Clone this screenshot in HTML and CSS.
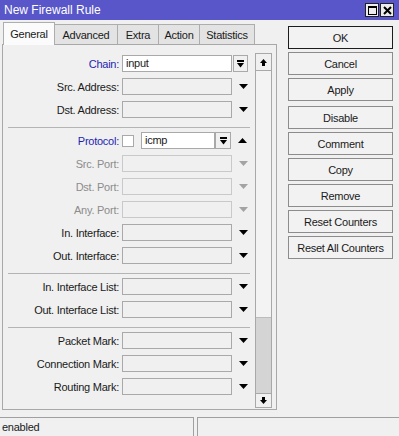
FILE: index.html
```html
<!DOCTYPE html>
<html lang="en">
<head>
  <meta charset="UTF-8">
  <title>New Firewall Rule</title>
  <link rel="stylesheet" href="styles.css">
</head>
<body>
  <div class="titlebar">
    <span class="title">New Firewall Rule</span>
    <div class="win-btns">
      <div class="win-btn">
        <svg width="9" height="9" viewBox="0 0 9 9"><rect x="0.5" y="0.5" width="8" height="8" fill="none" stroke="#000"/><rect x="0" y="0" width="9" height="2" fill="#000"/></svg>
      </div>
      <div class="win-btn">
        <svg width="9" height="9" viewBox="0 0 9 9"><path d="M1 1 L8 8 M8 1 L1 8" stroke="#000" stroke-width="2"/></svg>
      </div>
    </div>
  </div>

  <div class="main">
    <div class="left">
      <div class="tabs">
        <div class="tab active" style="width:52px">General</div>
        <div class="tab" style="width:63px">Advanced</div>
        <div class="tab" style="width:41px">Extra</div>
        <div class="tab" style="width:41px">Action</div>
        <div class="tab" style="width:55px">Statistics</div>
      </div>

      <div class="panel">
        <div class="form">
          <div class="row">
            <span class="label blue">Chain:</span>
            <div class="field filled">input</div>
            <div class="dd-btn">
              <svg width="7" height="8" viewBox="0 0 7 8"><rect x="0" y="0" width="7" height="2"/><polygon points="0,3 7,3 3.5,7.5"/></svg>
            </div>
          </div>
          <div class="row">
            <span class="label">Src. Address:</span>
            <div class="field"></div>
            <div class="arrow"><svg width="9" height="5" viewBox="0 0 9 5"><polygon points="0,0 9,0 4.5,5"/></svg></div>
          </div>
          <div class="row">
            <span class="label">Dst. Address:</span>
            <div class="field"></div>
            <div class="arrow"><svg width="9" height="5" viewBox="0 0 9 5"><polygon points="0,0 9,0 4.5,5"/></svg></div>
          </div>

          <div class="sep"></div>

          <div class="row">
            <span class="label blue">Protocol:</span>
            <div class="check"></div>
            <div class="field filled short">icmp</div>
            <div class="dd-btn wide">
              <svg width="7" height="8" viewBox="0 0 7 8"><rect x="0" y="0" width="7" height="2"/><polygon points="0,3 7,3 3.5,7.5"/></svg>
            </div>
            <div class="arrow up"><svg width="9" height="5" viewBox="0 0 9 5"><polygon points="0,5 9,5 4.5,0"/></svg></div>
          </div>
          <div class="row disabled">
            <span class="label">Src. Port:</span>
            <div class="field"></div>
            <div class="arrow"><svg width="9" height="5" viewBox="0 0 9 5"><polygon points="0,0 9,0 4.5,5"/></svg></div>
          </div>
          <div class="row disabled">
            <span class="label">Dst. Port:</span>
            <div class="field"></div>
            <div class="arrow"><svg width="9" height="5" viewBox="0 0 9 5"><polygon points="0,0 9,0 4.5,5"/></svg></div>
          </div>
          <div class="row disabled">
            <span class="label">Any. Port:</span>
            <div class="field"></div>
            <div class="arrow"><svg width="9" height="5" viewBox="0 0 9 5"><polygon points="0,0 9,0 4.5,5"/></svg></div>
          </div>
          <div class="row">
            <span class="label">In. Interface:</span>
            <div class="field"></div>
            <div class="arrow"><svg width="9" height="5" viewBox="0 0 9 5"><polygon points="0,0 9,0 4.5,5"/></svg></div>
          </div>
          <div class="row">
            <span class="label">Out. Interface:</span>
            <div class="field"></div>
            <div class="arrow"><svg width="9" height="5" viewBox="0 0 9 5"><polygon points="0,0 9,0 4.5,5"/></svg></div>
          </div>

          <div class="sep"></div>

          <div class="row">
            <span class="label">In. Interface List:</span>
            <div class="field"></div>
            <div class="arrow"><svg width="9" height="5" viewBox="0 0 9 5"><polygon points="0,0 9,0 4.5,5"/></svg></div>
          </div>
          <div class="row">
            <span class="label">Out. Interface List:</span>
            <div class="field"></div>
            <div class="arrow"><svg width="9" height="5" viewBox="0 0 9 5"><polygon points="0,0 9,0 4.5,5"/></svg></div>
          </div>

          <div class="sep"></div>

          <div class="row">
            <span class="label">Packet Mark:</span>
            <div class="field"></div>
            <div class="arrow"><svg width="9" height="5" viewBox="0 0 9 5"><polygon points="0,0 9,0 4.5,5"/></svg></div>
          </div>
          <div class="row">
            <span class="label">Connection Mark:</span>
            <div class="field"></div>
            <div class="arrow"><svg width="9" height="5" viewBox="0 0 9 5"><polygon points="0,0 9,0 4.5,5"/></svg></div>
          </div>
          <div class="row">
            <span class="label">Routing Mark:</span>
            <div class="field"></div>
            <div class="arrow"><svg width="9" height="5" viewBox="0 0 9 5"><polygon points="0,0 9,0 4.5,5"/></svg></div>
          </div>
        </div>

        <div class="scrollbar">
          <div class="sb-btn">
            <svg width="7" height="7" viewBox="0 0 7 7"><polygon points="0,4 7,4 3.5,0"/><rect x="2" y="4" width="3" height="3"/></svg>
          </div>
          <div class="sb-track">
            <div class="sb-thumb"></div>
          </div>
          <div class="sb-btn bottom">
            <svg width="7" height="7" viewBox="0 0 7 7"><rect x="2" y="0" width="3" height="3"/><polygon points="0,3 7,3 3.5,7"/></svg>
          </div>
        </div>
      </div>
    </div>

    <div class="buttons">
      <div class="btn default">OK</div>
      <div class="btn">Cancel</div>
      <div class="btn">Apply</div>
      <div class="btn spaced">Disable</div>
      <div class="btn">Comment</div>
      <div class="btn">Copy</div>
      <div class="btn">Remove</div>
      <div class="btn">Reset Counters</div>
      <div class="btn">Reset All Counters</div>
    </div>
  </div>

  <div class="statusbar">
    <div class="status first">enabled</div>
    <div class="status"></div>
  </div>
</body>
</html>
```

FILE: styles.css
```css
body {
  margin: 0;
  width: 399px;
  height: 436px;
  overflow: hidden;
  background: #f0f0f0;
  font-family: "Liberation Sans", Arial, sans-serif;
  font-size: 11px;
  letter-spacing: -0.25px;
  color: #1a1a1a;
}

/* title bar */
.titlebar {
  height: 20px;
  background: #5856c8;
  color: #fff;
  display: flex;
  align-items: center;
  padding: 0 5px 0 4px;
  font-size: 12px;
  letter-spacing: 0;
}

.title {
  flex: 1;
}

.win-btns {
  display: flex;
  gap: 1px;
}

.win-btn {
  width: 14px;
  height: 14px;
  box-sizing: border-box;
  background: #ececec;
  border: 1px solid #222;
  display: flex;
  align-items: center;
  justify-content: center;
}

/* main area */
.main {
  display: flex;
  height: 397px;
}

.left {
  width: 277px;
  padding-top: 2px;
  box-sizing: border-box;
}

.tabs {
  display: flex;
  align-items: flex-end;
  height: 22px;
  margin-left: 3px;
}

.tab {
  height: 20px;
  box-sizing: border-box;
  border: 1px solid #adadad;
  border-bottom: none;
  border-left: none;
  background: #e3e3e3;
  display: flex;
  align-items: center;
  justify-content: center;
}

.tab.active {
  height: 23px;
  margin-bottom: -1px;
  border-left: 1px solid #adadad;
  background: #fbfbfb;
  position: relative;
  z-index: 1;
  padding-bottom: 1px;
}

.panel {
  margin-left: 2px;
  width: 275px;
  height: 366px;
  box-sizing: border-box;
  border: 1px solid #a8a8a8;
  display: flex;
}

.form {
  width: 252px;
  padding-top: 10px;
  display: flex;
  flex-direction: column;
}

.row {
  display: flex;
  align-items: center;
  height: 17px;
  margin-bottom: 6px;
}

.label {
  width: 116px;
  margin-right: 3px;
  text-align: right;
  white-space: nowrap;
}

.label.blue {
  color: #1f1fb0;
}

.field {
  width: 110px;
  height: 17px;
  box-sizing: border-box;
  border: 1px solid #a9a9a9;
  padding-left: 3px;
  line-height: 15px;
}

.field.filled {
  background: #fff;
}

.field.short {
  width: 74px;
}

.check {
  width: 12px;
  height: 12px;
  box-sizing: border-box;
  border: 1px solid #a9a9a9;
  background: #fff;
  margin-right: 7px;
}

.dd-btn {
  width: 15px;
  height: 17px;
  box-sizing: border-box;
  border: 1px solid #a9a9a9;
  margin-left: 1px;
  display: flex;
  align-items: center;
  justify-content: center;
}

.dd-btn.wide {
  width: 16px;
  margin-left: 0;
}

.arrow {
  width: 21px;
  margin-left: 1px;
  display: flex;
  align-items: center;
  justify-content: center;
}

.arrow.up {
  width: 23px;
  margin-left: 0;
}

.row.disabled .label {
  color: #8c8c8c;
}

.row.disabled .field {
  border-color: #c9c9c9;
}

.row.disabled .arrow svg {
  fill: #a3a3a3;
}

.sep {
  width: 242px;
  height: 1px;
  flex: none;
  background: #b4b4b4;
  margin: 3px 0 4px 5px;
}

/* scrollbar */
.scrollbar {
  width: 17px;
  margin: 8px 0 1px 0;
  box-sizing: border-box;
  border: 1px solid #a8a8a8;
  display: flex;
  flex-direction: column;
}

.sb-btn {
  height: 16px;
  border-bottom: 1px solid #a8a8a8;
  display: flex;
  align-items: center;
  justify-content: center;
  background: #f0f0f0;
}

.sb-btn.bottom {
  height: 13px;
  border-bottom: none;
  border-top: 1px solid #a8a8a8;
}

.sb-track {
  flex: 1;
  display: flex;
  flex-direction: column;
  justify-content: flex-end;
  background: #f3f3f3;
}

.sb-thumb {
  height: 75px;
  background: #d4d4d4;
  border-top: 1px solid #bcbcbc;
}

/* buttons */
.buttons {
  margin-left: 11px;
  padding-top: 6px;
  width: 105px;
}

.btn {
  height: 23px;
  box-sizing: border-box;
  border: 1px solid #8c8c8c;
  background: #f2f2f2;
  margin-bottom: 3px;
  display: flex;
  align-items: center;
  justify-content: center;
}

.btn.default {
  border-color: #1c1c1c;
}

.btn.spaced {
  margin-top: 5px;
}

/* status bar */
.statusbar {
  display: flex;
  gap: 3px;
  height: 19px;
}

.status {
  flex: 1;
  border-top: 1px solid #a0a0a0;
  border-left: 1px solid #a0a0a0;
  padding-left: 2px;
  line-height: 18px;
}

.status.first {
  flex: none;
  width: 191px;
  border-left: none;
  border-right: 1px solid #a0a0a0;
}
```
